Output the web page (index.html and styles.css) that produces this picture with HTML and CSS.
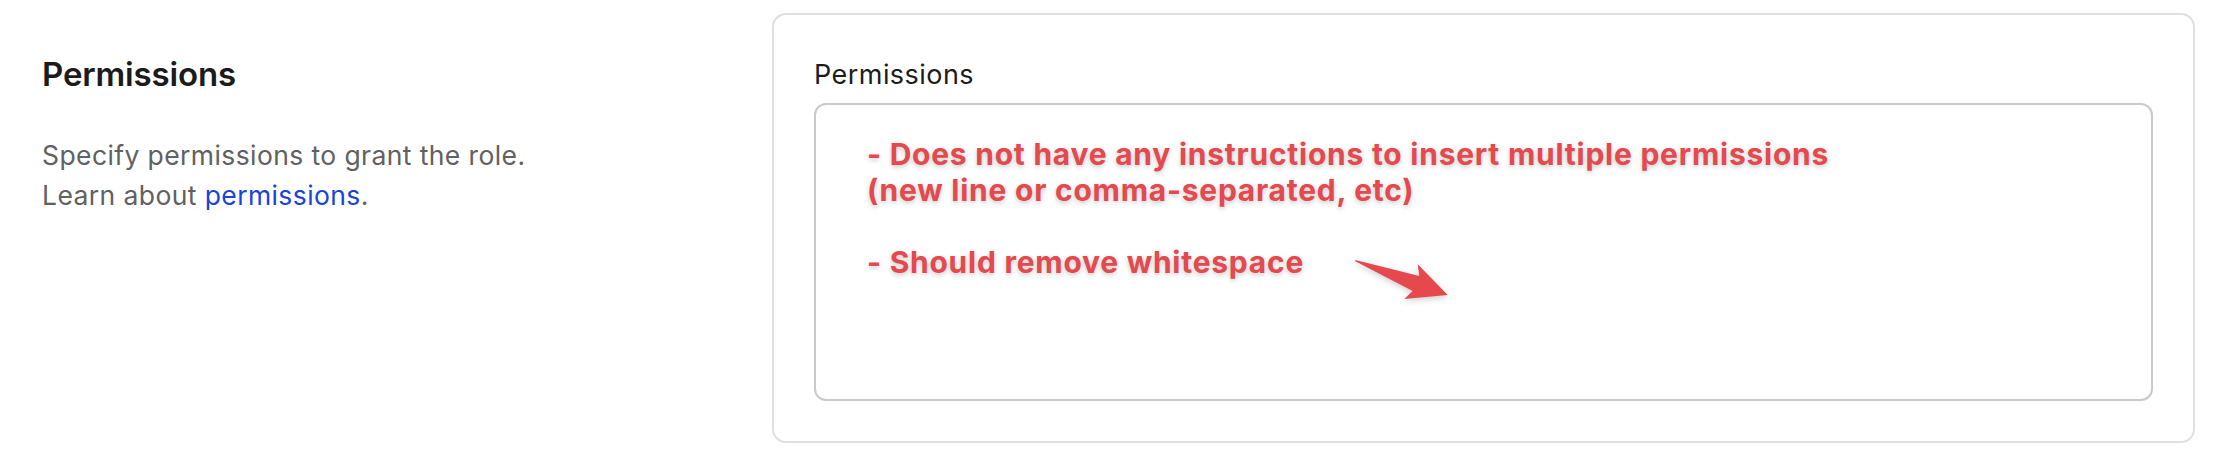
FILE: index.html
```html
<!DOCTYPE html>
<html lang="en">
<head>
<meta charset="utf-8">
<title>Permissions</title>
<link rel="stylesheet" href="styles.css">
</head>
<body>
<div class="page">
  <section class="intro">
    <h2 class="intro-title">Permissions</h2>
    <p class="intro-text">Specify permissions to grant the role.<br>Learn about <a class="link" href="#">permissions</a>.</p>
  </section>
  <section class="card">
    <label class="field-label">Permissions</label>
    <div class="field-box">
      <div class="note">
        <p class="note-line">- Does not have any instructions to insert multiple permissions<br>(new line or comma-separated, etc)</p>
        <p class="note-line">- Should remove whitespace</p>
      </div>
      <svg class="arrow" viewBox="0 0 100 45" width="100" height="45" aria-hidden="true">
        <polygon points="4.3,2 68.3,18 66.7,6.3 96.7,37 53.3,41 61.7,33 4.3,3.2" fill="#e5484d"/>
      </svg>
    </div>
  </section>
</div>
</body>
</html>
```
FILE: styles.css
```css
* { box-sizing: border-box; }
html, body { margin: 0; padding: 0; background: #ffffff; }
body {
  font-family: Inter, "Noto Sans", "Liberation Sans", sans-serif;
  width: 2224px;
  height: 472px;
  overflow: hidden;
}
.page {
  display: flex;
  align-items: flex-start;
  padding: 13px 29px 0 42px;
}
.intro {
  width: 730px;
  flex: none;
  padding-top: 41px;
}
.intro-title {
  margin: 0;
  font-size: 33px;
  line-height: 40px;
  font-weight: 600;
  color: #1b1b1b;
  letter-spacing: -0.15px;
}
.intro-text {
  margin: 41px 0 0;
  font-size: 26.5px;
  line-height: 40px;
  color: #616161;
  letter-spacing: 0.4px;
}
.link {
  color: #1a44d8;
  text-decoration: none;
}
.card {
  flex: none;
  width: 1423px;
  height: 430px;
  border: 2px solid #e0e0e0;
  border-radius: 14px;
  padding: 42px 40px 40px 40px;
  display: flex;
  flex-direction: column;
}
.field-label {
  font-size: 27px;
  line-height: 36px;
  color: #1c1c1c;
  letter-spacing: 0.45px;
  margin-bottom: 10px;
}
.field-box {
  position: relative;
  flex: 1;
  border: 2px solid #c9c9c9;
  border-radius: 12px;
  padding: 31px 40px 0 51px;
}
.note {
  color: #e5484d;
  font-size: 30px;
  line-height: 36px;
  font-weight: 700;
  letter-spacing: 0.75px;
  text-shadow: 0 2px 5px rgba(0, 0, 0, 0.22);
}
.note-line { margin: 0 0 36px; }
.arrow {
  position: absolute;
  left: 535px;
  top: 153px;
  filter: drop-shadow(0 2px 3px rgba(0, 0, 0, 0.2));
}
```
